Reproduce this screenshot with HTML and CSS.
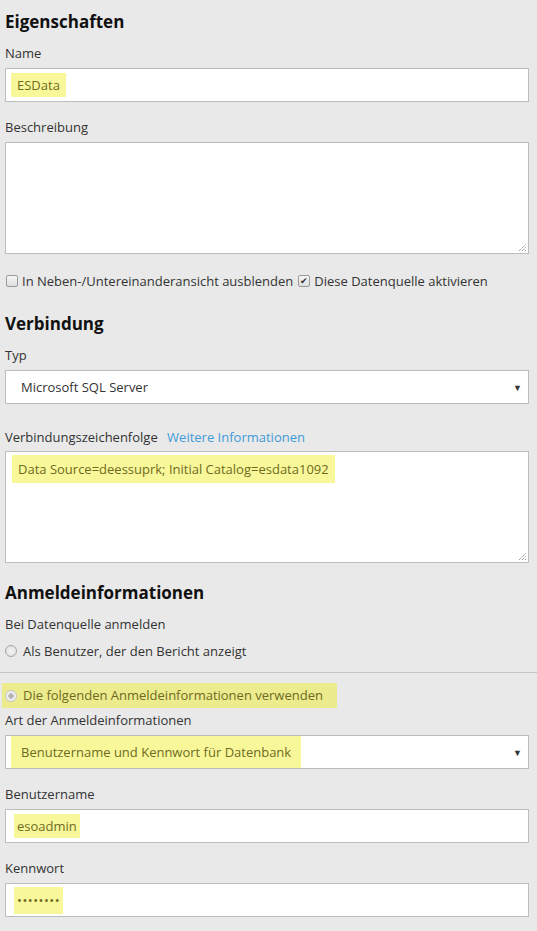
FILE: index.html
```html
<!DOCTYPE html>
<html lang="de">
<head>
<meta charset="utf-8">
<link rel="stylesheet" href="styles.css">
</head>
<body>
<div class="page">
  <h2 class="heading">Eigenschaften</h2>
  <div class="label">Name</div>
  <div class="field"><span class="hl">ESData</span></div>

  <div class="label gap">Beschreibung</div>
  <div class="area">
    <svg class="grip" width="9" height="9" viewBox="0 0 9 9"><path d="M1 8 L8 1 M4 8 L8 4 M7 8 L8 7" stroke="#777" stroke-width="1" stroke-dasharray="1 1" fill="none"/></svg>
  </div>

  <div class="checks">
    <span class="cb"></span><span class="cbtext">In Neben-/Untereinanderansicht ausblenden</span>
    <span class="cb checked">✔</span><span class="cbtext">Diese Datenquelle aktivieren</span>
  </div>

  <h2 class="heading h-verb">Verbindung</h2>
  <div class="label">Typ</div>
  <div class="field select"><span class="seltext">Microsoft SQL Server</span><span class="arrow">▼</span></div>

  <div class="label conn">Verbindungszeichenfolge <a class="link">Weitere Informationen</a></div>
  <div class="area area2">
    <span class="hl hl-conn">Data Source=deessuprk; Initial Catalog=esdata1092</span>
    <svg class="grip" width="9" height="9" viewBox="0 0 9 9"><path d="M1 8 L8 1 M4 8 L8 4 M7 8 L8 7" stroke="#777" stroke-width="1" stroke-dasharray="1 1" fill="none"/></svg>
  </div>

  <h2 class="heading h-anm">Anmeldeinformationen</h2>
  <div class="label">Bei Datenquelle anmelden</div>
  <div class="radio-row"><span class="radio"></span>Als Benutzer, der den Bericht anzeigt</div>
</div>
<hr class="sep">
<div class="page page2">
  <div class="radio-row hlrow"><span class="radio on"></span>Die folgenden Anmeldeinformationen verwenden</div>
  <div class="label">Art der Anmeldeinformationen</div>
  <div class="field select"><span class="hl hl-sel">Benutzername und Kennwort für Datenbank</span><span class="arrow">▼</span></div>

  <div class="label gap">Benutzername</div>
  <div class="field"><span class="hl hl-user">esoadmin</span></div>

  <div class="label gap">Kennwort</div>
  <div class="field"><span class="hl hl-pw">••••••••</span></div>
</div>
</body>
</html>
```
FILE: styles.css
```css
* { box-sizing: border-box; }
html, body { margin: 0; padding: 0; background: #e9e9e9; }
body {
  font-family: "Open Sans", "Noto Sans", sans-serif;
  font-size: 13px;
  color: #333;
  width: 537px;
  height: 931px;
  overflow: hidden;
}
.page { padding: 10px 8px 0 5px; }
.page2 { padding-top: 10px; }
.heading {
  margin: 0 0 9px 0;
  font-size: 17px;
  line-height: 24px;
  font-weight: 700;
  color: #111;
}
.label { line-height: 20px; margin-bottom: 5px; color: #333; }
.gap { margin-top: 15px; }
.conn { margin-top: 23px; margin-bottom: 4px; }
.link { color: #3f9bd8; margin-left: 6px; }
.field {
  height: 34px;
  background: #fff;
  border: 1px solid #bdbdbd;
  padding: 4px 5px;
  display: flex;
  align-items: center;
}
.hl {
  background: #f8f89a;
  color: #6f6a22;
  line-height: 24px;
  padding: 0 6px;
  display: inline-block;
}
.area {
  position: relative;
  height: 112px;
  background: #fff;
  border: 1px solid #bdbdbd;
  margin-bottom: 17px;
}
.area2 { padding: 3px 6px; margin-bottom: 18px; }
.hl-conn { line-height: 28px; }
.grip { position: absolute; right: 1px; bottom: 1px; }
.checks { display: flex; align-items: center; line-height: 20px; margin-bottom: 21px; }
.cb {
  width: 12px; height: 12px;
  border: 1px solid #9a9a9a;
  border-radius: 2px;
  background: linear-gradient(#f6f6f6, #dedede);
  margin: 0 4px 0 1px;
  font-size: 9px;
  line-height: 10px;
  text-align: center;
  color: #333;
}
.cbtext { margin-right: 4px; }
.select { justify-content: space-between; padding-left: 15px; padding-right: 6px; }
.seltext { color: #333; }
.arrow { font-size: 9px; color: #333; }
.field.select .hl-sel { margin-left: -10px; line-height: 32px; padding: 0 10px; }
.radio-row { display: flex; align-items: center; line-height: 20px; margin-top: 7px; }
.radio {
  width: 12px; height: 12px;
  border-radius: 50%;
  border: 1px solid #a8a8a8;
  background: radial-gradient(circle, #f4f4f4, #dcdcdc);
  margin-right: 6px;
}
.radio.on {
  background: radial-gradient(circle, #b8b8b8 0 2.5px, #eeeeee 3px);
  border-color: #c8c8c0;
}
.sep { border: 0; border-top: 1px solid #c6c6c6; margin: 11px 0 0 0; }
.hlrow {
  margin: 0 0 2px -3px;
  padding: 0 8px 0 3px;
  background: #ecec8e;
  color: #6f6a22;
  line-height: 25px;
  width: 335px;
}
.hl-user { line-height: 24px; margin-left: 3px; padding: 0 3px; }
.hl-pw { line-height: 27px; margin-left: 3px; padding: 0 3px; letter-spacing: 0.5px; }
```
